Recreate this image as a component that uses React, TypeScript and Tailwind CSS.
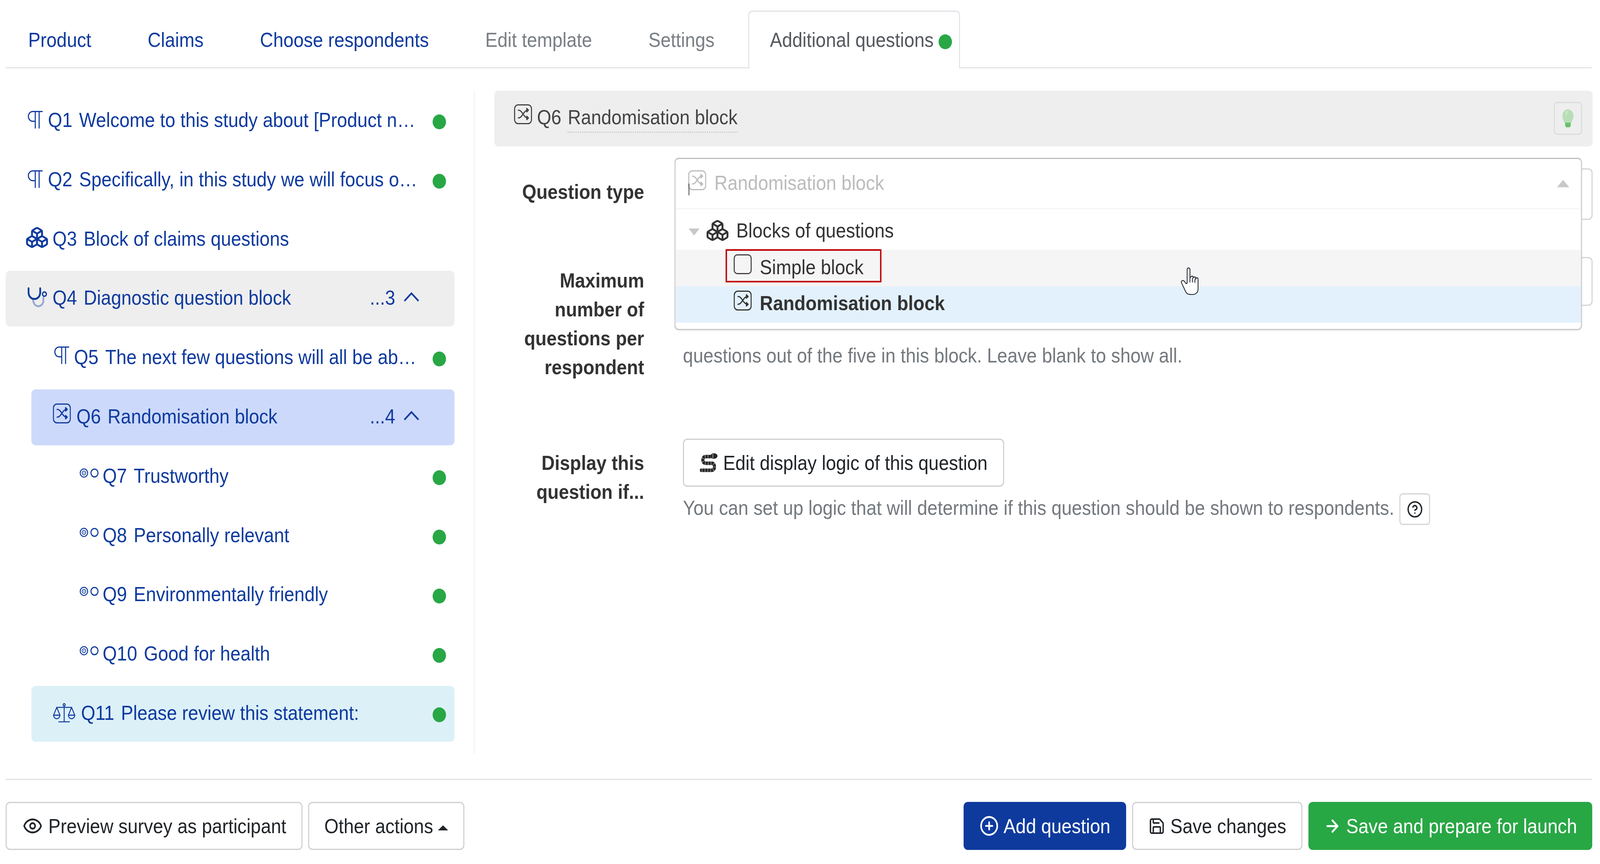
import React from "react";
import { Boxes, Eye, CirclePlus, Save, ArrowRight, CircleHelp } from "lucide-react";

const Pilcrow = () => (
  <svg viewBox="0 0 44 46" className="w-[44px] h-[46px]" fill="none" stroke="currentColor" strokeWidth="3">
    <path d="M43 2.5H15a12.5 12.5 0 0 0 0 25h7" />
    <path d="M22 2.5V46M33 2.5V46" />
  </svg>
);

const ShuffleBox = ({ className = "" }: { className?: string }) => (
  <svg viewBox="0 0 51 51" className={`w-[51px] h-[51px] ${className}`} fill="none" stroke="currentColor" strokeWidth="3" strokeLinecap="round" strokeLinejoin="round">
    <rect x="1.5" y="1.5" width="48" height="48" rx="10" />
    <path d="M12 15c6 0 9 4 13.5 10s8 10 14 10M12 35c6 0 9-4 13.5-10s8-10 14-10" />
    <path d="M36 10.5l5 4.5-5 4.5ZM36 30.5l5 4.5-5 4.5Z" fill="currentColor" />
  </svg>
);

const CubesIcon = () => <Boxes strokeWidth={1.9} preserveAspectRatio="none" className="w-[68px] h-[60px]" />;

const Stethoscope = () => (
  <svg viewBox="0 0 56 52" className="w-[56px] h-[52px]" fill="none" strokeWidth="5">
    <path d="M16 35c2 9 8 14 15 14s14-6 14-14v-8" stroke="#98a6d4" strokeWidth="5" strokeLinecap="round" />
    <path d="M3 3v11a16.5 16.5 0 0 0 33 0V3" stroke="#0e3a9e" strokeLinecap="round" />
    <circle cx="48" cy="18" r="5.5" stroke="#0e3a9e" strokeWidth="3.5" />
  </svg>
);

const ScaleIcon = () => (
  <svg viewBox="0 0 64 50" className="w-[64px] h-[50px]" fill="none" stroke="currentColor" strokeWidth="2.6" strokeLinejoin="round">
    <circle cx="32" cy="4.5" r="3" />
    <path d="M32 7.5V47M10 11h44M16 48h32" />
    <path d="M11 11 2 31h18ZM53 11l-9 20h18Z" />
    <path d="M2 31a9 9 0 0 0 18 0ZM44 31a9 9 0 0 0 18 0Z" />
  </svg>
);

const Radios = () => (
  <svg viewBox="0 0 54 24" className="w-[54px] h-[24px]" fill="none" stroke="currentColor">
    <circle cx="12" cy="12" r="10.5" strokeWidth="2.6" />
    <circle cx="12" cy="12" r="5" strokeWidth="2.2" />
    <circle cx="12" cy="12" r="1.4" fill="currentColor" stroke="none" />
    <circle cx="42" cy="12" r="10" strokeWidth="3" />
  </svg>
);

const Chevron = () => (
  <svg viewBox="0 0 44 24" className="w-[44px] h-[24px]" fill="none" stroke="currentColor" strokeWidth="4.5">
    <path d="M2 22.5 22 3l20 19.5" />
  </svg>
);

const Dot = () => <span className="block w-[38px] h-[38px] rounded-full bg-[#28a745] shrink-0" />;

type Row = {
  icon: React.ReactNode;
  iconBox: string;
  q: string;
  text: string;
  indent: string;
  bg: string;
  dot?: boolean;
  count?: string;
};

const rows: Row[] = [
  { icon: <Pilcrow />, iconBox: "w-[58px] pt-[13px]", q: "Q1", text: "Welcome to this study about [Product n…", indent: "ml-0 pl-[62px]", bg: "", dot: true },
  { icon: <Pilcrow />, iconBox: "w-[58px] pt-[13px]", q: "Q2", text: "Specifically, in this study we will focus o…", indent: "ml-0 pl-[62px]", bg: "", dot: true },
  { icon: <CubesIcon />, iconBox: "w-[71px] pt-[4px] [&>svg]:-ml-[7px]", q: "Q3", text: "Block of claims questions", indent: "ml-0 pl-[62px]", bg: "" },
  { icon: <Stethoscope />, iconBox: "w-[71px] pt-[10px]", q: "Q4", text: "Diagnostic question block", indent: "ml-0 pl-[62px]", bg: "bg-[#eeeeee]", count: "...3" },
  { icon: <Pilcrow />, iconBox: "w-[57px] pt-[9px]", q: "Q5", text: "The next few questions will all be ab…", indent: "ml-[73px] pl-[64px]", bg: "", dot: true },
  { icon: <ShuffleBox />, iconBox: "w-[67px] pt-[4px]", q: "Q6", text: "Randomisation block", indent: "ml-[73px] pl-[61px]", bg: "bg-[#ccd9fb]", count: "...4" },
  { icon: <Radios />, iconBox: "w-[65px] pt-[18px]", q: "Q7", text: "Trustworthy", indent: "ml-[146px] pl-[64px]", bg: "", dot: true },
  { icon: <Radios />, iconBox: "w-[65px] pt-[18px]", q: "Q8", text: "Personally relevant", indent: "ml-[146px] pl-[64px]", bg: "", dot: true },
  { icon: <Radios />, iconBox: "w-[65px] pt-[18px]", q: "Q9", text: "Environmentally friendly", indent: "ml-[146px] pl-[64px]", bg: "", dot: true },
  { icon: <Radios />, iconBox: "w-[65px] pt-[18px]", q: "Q10", text: "Good for health", indent: "ml-[146px] pl-[64px]", bg: "", dot: true },
  { icon: <ScaleIcon />, iconBox: "w-[80px] pt-[12px]", q: "Q11", text: "Please review this statement:", indent: "ml-[73px] pl-[61px]", bg: "bg-[#dcf0f8]", dot: true },
];

const Tab = ({ label, tone }: { label: string; tone: string }) => (
  <div className={`h-[148px] -mb-[3px] mr-[32px] px-[61px] pt-[35px] border-[3px] border-transparent ${tone}`}>{label}</div>
);

const btn = "h-[123px] flex items-center rounded-[12px] border-[3px] border-[#cfcfcf] bg-white text-[#212529]";

export default function App() {
  return (
    <div className="w-full h-[2212px] overflow-hidden bg-white">
      <div className="relative origin-top-left scale-x-[0.9026] w-[4538px] h-[2212px] overflow-hidden bg-white font-['Liberation_Sans',Arial,sans-serif] text-[51.9px] leading-[74px] text-[#212529]">
        <nav className="flex ml-[16px] mr-[23px] pt-[27px] border-b-[3px] border-[#e2e4e7]">
          <Tab label="Product" tone="text-[#0e3a9e]" />
          <Tab label="Claims" tone="text-[#0e3a9e]" />
          <Tab label="Choose respondents" tone="text-[#0e3a9e]" />
          <Tab label="Edit template" tone="text-[#7a7f85]" />
          <Tab label="Settings" tone="text-[#7a7f85]" />
          <div className="h-[148px] -mb-[3px] ml-[-1px] pl-[59px] pr-[20px] pt-[35px] flex items-start border-[3px] border-b-0 border-[#dee2e6] bg-white rounded-t-[12px] text-[#55595e]">
            <span>Additional questions</span>
            <span className="ml-[14px] mt-[23px]"><Dot /></span>
          </div>
        </nav>

        <main className="flex mt-[57px] h-[1698px]">
          <aside className="w-[1330px] ml-[16px] pt-[6px] pr-[55px] border-r-[2px] border-[#eeeeee] text-[#0e3a9e] shrink-0">
            {rows.map((r) => (
              <div key={r.q} className={`flex items-start h-[143px] mb-[8.8px] pt-[32px] rounded-[12px] ${r.indent} ${r.bg}`}>
                <span className={`shrink-0 block ${r.iconBox}`}>{r.icon}</span>
                <span>{r.q}</span>
                <span className="ml-[19px] whitespace-nowrap">{r.text}</span>
                {r.dot && (
                  <span className="ml-auto mr-[24px] mt-[23px]"><Dot /></span>
                )}
                {r.count && (
                  <span className="ml-auto mr-[100px] flex items-start">
                    <span className="mr-[24px]">{r.count}</span>
                    <span className="block mt-[23px]"><Chevron /></span>
                  </span>
                )}
              </div>
            ))}
          </aside>

          <section className="relative ml-[56px] w-[3115px] shrink-0">
            <header className="flex items-start h-[143px] rounded-[12px] bg-[#eeeeee] pl-[56px] pt-[31px] text-[#444444]">
              <span className="block w-[65px] pt-[4px]"><ShuffleBox /></span>
              <span>Q6</span>
              <span className="ml-[18px] h-[77px] border-b-[3px] border-dotted border-[#c8c8c8]">Randomisation block</span>
              <span className="ml-auto mr-[30px] -mt-[2px] flex items-center justify-center w-[80px] h-[84px] rounded-[9px] border-[3px] border-[#dcdcdc]">
                <svg viewBox="0 0 32 46" className="w-[32px] h-[46px]">
                  <path d="M16 0C7 0 0 8 0 17c0 7 4 11 6 17h20c2-6 6-10 6-17C32 8 25 0 16 0Z" fill="#b8deb9" />
                  <path d="M8 34h16v7a5 5 0 0 1-5 5h-6a5 5 0 0 1-5-5Z" fill="#69c26f" />
                  <path d="M11 13c0-4 2-7 5-8" fill="none" stroke="#e6f4e6" strokeWidth="1.8" />
                </svg>
              </span>
            </header>

            <div className="flex items-start mt-[56px]">
              <div className="w-[425px] pt-[23px] text-right font-bold text-[#333333]">Question type</div>
              <div className="ml-[110px] flex-1 h-[132px] rounded-[12px] border-[3px] border-[#d4d4d4]" />
            </div>

            <div className="flex items-start mt-[95px]">
              <div className="w-[425px] pt-[23px] text-right font-bold text-[#333333]">
                Maximum
                <br />
                number of
                <br />
                questions per
                <br />
                respondent
              </div>
              <div className="ml-[110px] flex-1">
                <div className="h-[125px] rounded-[12px] border-[3px] border-[#d4d4d4]" />
                <p className="mt-[90px] text-[#74797e]">questions out of the five in this block. Leave blank to show all.</p>
              </div>
            </div>

            <div className="flex items-start mt-[146px]">
              <div className="w-[425px] pt-[25px] text-right font-bold text-[#333333]">
                Display this
                <br />
                question if...
              </div>
              <div className="ml-[110px] flex-1">
                <button className={`${btn} pl-[45px] pr-[44px]`}>
                  <svg viewBox="0 0 51 50" className="w-[51px] h-[50px] mr-[15px]" fill="none">
                    <path d="M32 9H16c-10 0-10 17 0 17h18c10 0 10 18 0 18H4" stroke="#262626" strokeWidth="9" strokeLinecap="round" />
                    <path d="M32 9H16c-10 0-10 17 0 17h18c10 0 10 18 0 18H4" stroke="#ffffff" strokeWidth="9" strokeDasharray="1.6 6.4" strokeOpacity="0.55" />
                    <ellipse cx="40" cy="7.5" rx="10" ry="7" fill="#262626" />
                    <circle cx="37" cy="5" r="1.4" fill="#ffffff" />
                    <circle cx="37" cy="10" r="1.4" fill="#ffffff" />
                  </svg>
                  Edit display logic of this question
                </button>
                <div className="mt-[17px] flex items-start text-[#74797e]">
                  <span>You can set up logic that will determine if this question should be shown to respondents.</span>
                  <span className="ml-[15px] flex items-center justify-center w-[87px] h-[81px] rounded-[9px] border-[3px] border-[#d4d4d4] text-[#212529]">
                    <CircleHelp size={46} strokeWidth={2} />
                  </span>
                </div>
              </div>
            </div>

            <div className="absolute left-[511px] top-[172px] w-[2574px] h-[441px] rounded-[12px] border-[3px] border-[#cccccc] border-t-[#bdbdbd] bg-white shadow-[0_2px_3px_rgba(0,0,0,0.08)] overflow-hidden text-[#333333]">
              <div className="relative flex items-start h-[129px] pl-[36px] pt-[24px] border-b-[3px] border-[#f5f5f5] text-[#bcbcbc]">
                <span className="block w-[74px] pt-[5px]"><ShuffleBox /></span>
                <span>Randomisation block</span>
                <span className="absolute left-[37px] top-[63px] w-[2px] h-[30px] bg-[#333333]" />
                <svg viewBox="0 0 35 20" className="ml-auto mr-[33px] mt-[29px] w-[35px] h-[20px]">
                  <path d="M17.5 1 34 19H1Z" fill="#c8c8c8" stroke="#c8c8c8" strokeLinejoin="round" />
                </svg>
              </div>
              <div className="flex items-start h-[104px] pl-[36px] pt-[17px]">
                <svg viewBox="0 0 33 20" className="w-[33px] h-[20px] mt-[31px] mr-[22px]">
                  <path d="M1 1h31L16.5 19Z" fill="#c8c8c8" />
                </svg>
                <span className="block w-[81px] pt-[7px] [&>svg]:-ml-[6px]"><CubesIcon /></span>
                <span>Blocks of questions</span>
              </div>
              <div className="relative flex items-start h-[93px] pl-[165px] pt-[7px] bg-[#f5f5f5]">
                <span className="block w-[74px] pt-[4px]">
                  <span className="block w-[51px] h-[51px] rounded-[10px] border-[3px] border-[#444444]" />
                </span>
                <span>Simple block</span>
                <span className="absolute left-[142px] -top-[2px] w-[442px] h-[85px] border-[4.5px] border-[#c00000]" />
              </div>
              <div className="flex items-start h-[93px] pl-[165px] pt-[6px] bg-[#e3f1fd]">
                <span className="block w-[74px] pt-[5px]"><ShuffleBox /></span>
                <span className="font-bold">Randomisation block</span>
              </div>
            </div>
          </section>
        </main>

        <footer className="mt-[64px] mx-[16px] mr-[22px] border-t-[3px] border-[#e2e2e2] pt-[56px] flex items-start">
          <button className={`${btn} pl-[45px] pr-[43px]`}>
            <Eye size={57} strokeWidth={1.9} className="mr-[16px]" />
            Preview survey as participant
          </button>
          <button className={`${btn} ml-[16px] pl-[43px] pr-[43px]`}>
            Other actions
            <svg viewBox="0 0 29 13" className="ml-[14px] mt-[10px] w-[29px] h-[13px]">
              <path d="M14.5 0 29 13H0Z" fill="#212529" />
            </svg>
          </button>
          <button className="ml-auto h-[123px] flex items-center rounded-[12px] bg-[#0e3a9e] pl-[45px] pr-[45px] text-white">
            <CirclePlus size={55} strokeWidth={2} className="mr-[13px]" />
            Add question
          </button>
          <button className={`${btn} ml-[17px] pl-[43px] pr-[43px]`}>
            <Save size={48} strokeWidth={2} className="mr-[14px]" />
            Save changes
          </button>
          <button className="ml-[17px] h-[123px] flex items-center rounded-[12px] bg-[#28a745] pl-[43px] pr-[43px] text-white">
            <ArrowRight size={50} strokeWidth={2.4} className="mr-[14px]" />
            Save and prepare for launch
          </button>
        </footer>

        <svg viewBox="0 0 55 71" className="absolute left-[3346px] top-[684px] w-[55px] h-[71px]" fill="#ffffff" stroke="#2a2f3a" strokeWidth="2.4" strokeLinejoin="round">
          <path d="M25 2c-3 0-4 2-4 5v34l-3 1-6-7c-3-2-9 0-7 5l12 23c2 4 7 7 14 7h6c9 0 15-6 15-14V31c0-5-6-5-7 0v-3c0-4-6-4-7 0v-2c0-4-6-4-7 0l-2 1V7c0-3-1-5-4-5Z" />
          <path d="M29 27v12M36 28v11M43 31v9" fill="none" />
        </svg>
      </div>
    </div>
  );
}
